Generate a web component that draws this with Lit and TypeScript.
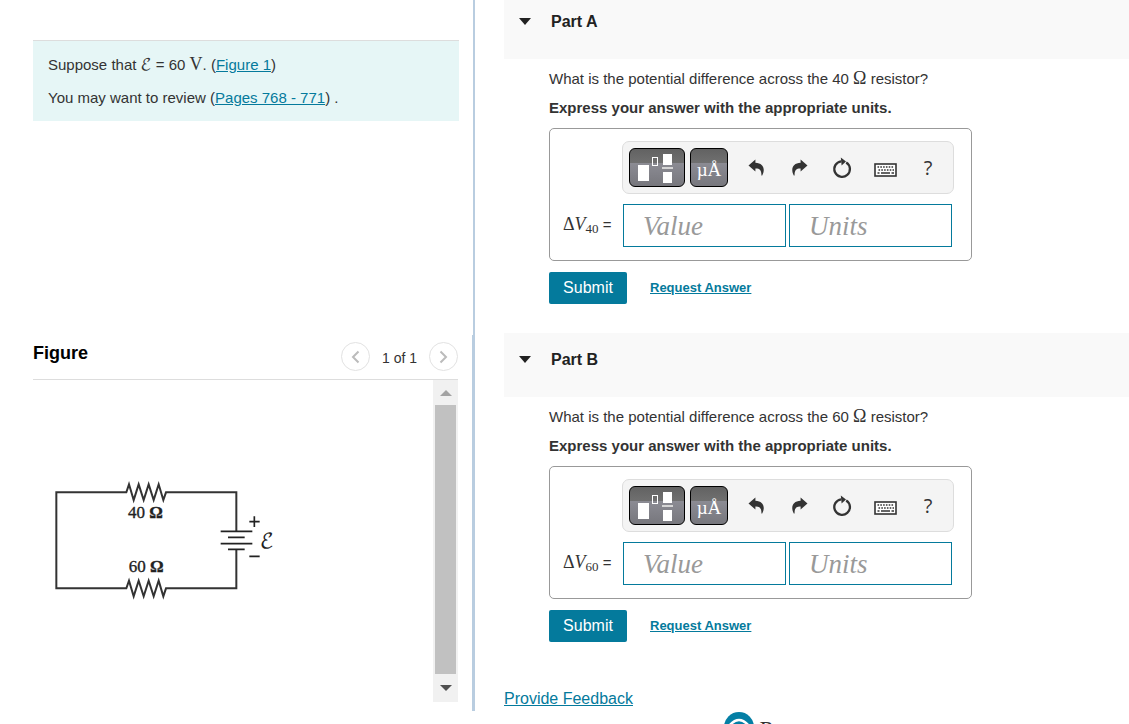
import { LitElement, html, css, svg } from "lit";
import { customElement, property } from "lit/decorators.js";

const undoArrow = svg`<path d="M7.4 0.5 L0.5 6.6 L7.4 12.6 V9.4 C11.6 9.2 13.6 11 13.4 16.5 L14.2 16.5 C17.6 10.5 15.4 4 7.4 3.8 Z" fill="#333"/>`;

@customElement("answer-toolbar")
class AnswerToolbar extends LitElement {
  static styles = css`
    :host { display: flex; align-items: center; gap: 5px; padding: 6px; box-sizing: border-box;
      background: #f4f4f4; border: 1px solid #ddd; border-radius: 7px; }
    button { display: flex; align-items: center; justify-content: center; padding: 0; margin: 0;
      width: 38px; height: 39px; border: 0; background: none; cursor: pointer; box-sizing: border-box;
      font-family: "Liberation Sans", Arial, sans-serif; color: #333; }
    .dark { border: 1px solid #000; border-radius: 6px; color: #fff;
      background: linear-gradient(#626262 0, #707070 38%, #8b8b93 39%, #77777d 100%);
      font: 19px/37px "Liberation Serif", "Times New Roman", serif; }
    .symbols { padding-top: 3px; }
    .wide { width: 56px; }
    .tools { display: flex; gap: 5px; margin-left: 4px; }
    .help { font: 20px/36px "Open Sans", "Noto Sans", sans-serif; }
    svg { display: block; }
  `;
  render() {
    return html`
      <button class="dark wide" type="button" aria-label="Templates">
        <svg width="38" height="32" viewBox="0 0 38 32">
          <rect x="0" y="13" width="11" height="16" fill="#fff"/>
          <rect x="14.5" y="5.5" width="5" height="8" fill="none" stroke="#fff"/>
          <rect x="25" y="2" width="9" height="11" fill="#fff"/>
          <rect x="24" y="15" width="11" height="2" fill="#d5d5d5"/>
          <rect x="25" y="20" width="9" height="11" fill="#fff"/>
        </svg>
      </button>
      <button class="dark symbols" type="button" aria-label="Units">µÅ</button>
      <div class="tools">
        <button type="button" aria-label="Undo"><svg width="17" height="18" viewBox="0 0 17 18">${undoArrow}</svg></button>
        <button type="button" aria-label="Redo"><svg width="17" height="18" viewBox="0 0 17 18"><g transform="translate(17 0) scale(-1 1)">${undoArrow}</g></svg></button>
        <button type="button" aria-label="Reset">
          <svg width="20" height="22" viewBox="0 0 20 22">
            <path d="M14.2 5.4 A7.8 7.8 0 1 1 9.2 4.3" fill="none" stroke="#333" stroke-width="2.3"/>
            <path d="M8.8 0.4 L14 4.4 L9.6 8.6 Z" fill="#333"/>
          </svg>
        </button>
        <button type="button" aria-label="Keyboard">
          <svg width="23" height="20" viewBox="0 0 23 20">
            <rect x="1" y="6" width="21" height="12" fill="#fff" stroke="#333" stroke-width="1.6"/>
            <path d="M3.5 9 H20 M4.5 12 H20" stroke="#333" stroke-width="1.6" stroke-dasharray="1.6 1.2"/>
            <path d="M3.5 15 H5.5 M7 15 H16 M17.5 15 H20" stroke="#333" stroke-width="1.6"/>
          </svg>
        </button>
        <button class="help" type="button" aria-label="Help">?</button>
      </div>`;
  }
}

@customElement("question-part")
class QuestionPart extends LitElement {
  @property() name = "";
  @property() ohms = "";
  static styles = css`
    :host { display: block; color: #333; font: 15px/18px "Liberation Sans", Arial, sans-serif; }
    .head { display: flex; align-items: flex-start; gap: 20px; height: 64px; padding: 17px 15px 0;
      box-sizing: border-box; background: #f9f9f9; }
    .toggle { padding: 0; margin: 0; border: 0; background: none; height: 18px; width: 12px; }
    .toggle svg { display: block; }
    h2 { margin: 0; font-size: 16px; line-height: 20px; color: #222; }
    .body { display: flex; flex-direction: column; align-items: flex-start; gap: 11px; padding: 11px 45px 29px; }
    p { margin: 0; height: 18px; white-space: nowrap; }
    .lead { font-weight: bold; }
    .math { font-family: "Liberation Serif", "Times New Roman", serif; font-size: 18px; line-height: 16px; }
    .answer { display: flex; flex-direction: column; align-items: flex-end; gap: 10px; box-sizing: border-box;
      padding: 12px 17px 13px 13px; border: 1px solid #999; border-radius: 5px; }
    .row { display: flex; align-items: center; gap: 3px; margin-right: 2px; }
    .row label { width: 57px; white-space: nowrap; }
    .row sub { font: 13px/12px "Liberation Serif", serif; vertical-align: -3px; }
    input { width: 163px; height: 43px; box-sizing: border-box; margin: 0; padding: 1px 19px 0; border: 1px solid #047a9c;
      border-radius: 0; background: #fff; color: #333; font: italic 27px "Liberation Serif", "Times New Roman", serif; }
    input::placeholder { color: #999; opacity: 1; }
    .actions { display: flex; align-items: center; gap: 23px; }
    .submit { height: 32px; width: 78px; padding: 0; border: 0; border-radius: 2px; background: #047a9c; color: #fff;
      font: 16px/18px "Liberation Sans", Arial, sans-serif; }
    a { color: #047a9c; font-size: 13px; font-weight: bold; }
  `;
  render() {
    return html`
      <header class="head">
        <button class="toggle" type="button" aria-label="Collapse">
          <svg width="12" height="18" viewBox="0 0 12 18"><path d="M0 6 H12 L6 13 Z" fill="#222"/></svg>
        </button>
        <h2>Part ${this.name}</h2>
      </header>
      <div class="body">
        <p>What is the potential difference across the ${this.ohms} <span class="math">Ω</span> resistor?</p>
        <p class="lead">Express your answer with the appropriate units.</p>
        <div class="answer">
          <answer-toolbar></answer-toolbar>
          <div class="row">
            <label for="value"><span class="math">Δ<i>V</i></span><sub>${this.ohms}</sub> =</label>
            <input id="value" placeholder="Value">
            <input aria-label="Units" placeholder="Units">
          </div>
        </div>
        <div class="actions">
          <button class="submit" type="button">Submit</button>
          <a href="#answer">Request Answer</a>
        </div>
      </div>`;
  }
}

@customElement("app-root")
class AppRoot extends LitElement {
  static styles = css`
    :host { display: grid; grid-template-columns: minmax(0, 475px) minmax(0, 1fr); column-gap: 29px; height: 100vh;
      overflow: hidden; background: #fff; color: #333; font: 15px/18px "Liberation Sans", Arial, sans-serif; }
    a { color: #047a9c; }
    .left { display: flex; flex-direction: column; height: 100vh; box-sizing: border-box; padding-bottom: 13px; }
    .intro { flex: 0 0 335px; box-sizing: border-box; padding: 40px 14px 0 33px; border-right: 2px solid #b9cde0; }
    .note { padding: 7px 15px; border-top: 1px solid #ddd; background: #e6f6f6; }
    .note p { margin: 0; height: 33px; line-height: 33px; }
    .math { font-family: "Liberation Serif", "Times New Roman", serif; font-size: 18px; }
    .script { font-family: "DejaVu Math TeX Gyre", "DejaVu Serif", serif; font-size: 16px; line-height: 16px; }
    .figure { flex: 1; min-height: 0; display: flex; flex-direction: column; box-sizing: border-box;
      padding: 0 14px 9px 33px; border-right: 3px solid #b9cde0; }
    .bar { display: flex; align-items: flex-start; justify-content: space-between; height: 45px; padding-top: 7px;
      box-sizing: border-box; border-bottom: 1px solid #ddd; }
    h2 { margin: 0; font-size: 18px; line-height: 22px; color: #000; }
    .pager { display: flex; align-items: center; gap: 12px; }
    .pager span { font-size: 14px; padding-top: 2px; }
    .round { width: 29px; height: 29px; padding: 0; display: flex; align-items: center; justify-content: center;
      border: 1px solid #e2e2e2; border-radius: 50%; background: #fff; }
    .view { flex: 1; min-height: 0; display: flex; justify-content: space-between; }
    .circuit { flex: 1; min-width: 0; padding: 90px 0 0 7px; overflow: hidden; }
    .track { width: 25px; display: flex; flex-direction: column; background: #f1f1f1; }
    .step { height: 25px; padding: 0; border: 0; background: none; display: flex; align-items: center; justify-content: center; }
    .thumb { flex: 1; margin: 0 2px; background: #c1c1c1; }
    .last { height: 28px; }
    .right { margin-top: -5px; min-width: 0; }
    .feedback { margin: 19px 0 4px; font-size: 16px; }
    .brand { display: flex; justify-content: center; align-items: flex-start; gap: 6px; padding-right: 74px;
      color: #333; font: 24px/24px "Liberation Serif", Georgia, serif; }
    .brand span { padding-top: 5px; }
    svg { display: block; }
  `;
  render() {
    return html`
      <section class="left">
        <div class="intro">
          <div class="note">
            <p>Suppose that <span class="script">ℰ</span> = 60 <span class="math">V</span>. (<a href="#figure">Figure 1</a>)</p>
            <p>You may want to review (<a href="#pages">Pages 768 - 771</a>) .</p>
          </div>
        </div>
        <div class="figure" id="figure">
          <div class="bar">
            <h2>Figure</h2>
            <div class="pager">
              <button class="round" type="button" aria-label="Previous"><svg width="9" height="14" viewBox="0 0 9 14"><path d="M7.5 1.5 L2 7 L7.5 12.5" fill="none" stroke="#bbb" stroke-width="2"/></svg></button>
              <span>1 of 1</span>
              <button class="round" type="button" aria-label="Next"><svg width="9" height="14" viewBox="0 0 9 14"><path d="M1.5 1.5 L7 7 L1.5 12.5" fill="none" stroke="#bbb" stroke-width="2"/></svg></button>
            </div>
          </div>
          <div class="view">
            <div class="circuit">
              <svg width="250" height="140" viewBox="0 0 750 420" font-family="Liberation Serif, Times New Roman, serif" fill="#222">
                <path d="M589 184 V67 H378 L370 90 L356 43 L341 90 L326 43 L311 90 L296 43 L281 90 L267 43 L259 67 H49 V355 H259 L267 332 L281 379 L296 332 L311 379 L326 332 L341 379 L356 332 L370 379 L378 355 H589 V238" fill="none" stroke="#333" stroke-width="6"/>
                <path d="M542 184 H637 M564 202 H614 M542 221 H637 M564 238 H614 M628 155 H659 M643 139 V171 M628 259 H659" fill="none" stroke="#222" stroke-width="5"/>
                <text x="264" y="145" font-size="51" stroke="#222" stroke-width="1">40 <tspan font-weight="bold">Ω</tspan></text>
                <text x="266" y="307" font-size="51" stroke="#222" stroke-width="1">60 <tspan font-weight="bold">Ω</tspan></text>
                <text x="659" y="235" font-size="62" font-family="DejaVu Math TeX Gyre, DejaVu Serif, serif">ℰ</text>
              </svg>
            </div>
            <div class="track">
              <button class="step" type="button" aria-label="Scroll up"><svg width="12" height="6" viewBox="0 0 12 6"><path d="M0 6 L6 0 L12 6 Z" fill="#a3a3a3"/></svg></button>
              <div class="thumb"></div>
              <button class="step last" type="button" aria-label="Scroll down"><svg width="12" height="6" viewBox="0 0 12 6"><path d="M0 0 L6 6 L12 0 Z" fill="#505050"/></svg></button>
            </div>
          </div>
        </div>
      </section>
      <main class="right">
        <question-part name="A" ohms="40"></question-part>
        <question-part name="B" ohms="60"></question-part>
        <p class="feedback"><a href="#feedback">Provide Feedback</a></p>
        <footer class="brand">
          <svg width="30" height="30" viewBox="0 0 30 30"><circle cx="15" cy="15" r="15" fill="#047fa5"/><path d="M5 14 Q15 2 25 14" fill="none" stroke="#fff" stroke-width="2.5"/></svg>
          <span>Pearson</span>
        </footer>
      </main>`;
  }
}
